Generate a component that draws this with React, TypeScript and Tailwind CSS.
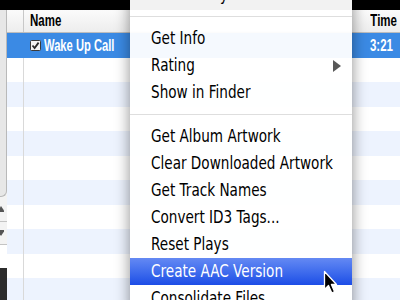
import React from "react";

const tableFont = { fontFamily: '"Liberation Sans", Arial, sans-serif' };
const menuFont = { fontFamily: '"DejaVu Sans", "Liberation Sans", sans-serif' };

function T({ children }: { children: React.ReactNode }) {
  return <span className="inline-block scale-y-[1.45] whitespace-nowrap">{children}</span>;
}

function M({ children }: { children: React.ReactNode }) {
  return <span className="inline-block scale-y-[1.25] whitespace-nowrap">{children}</span>;
}

function LeftStrip() {
  return (
    <div className="w-[7px] shrink-0 flex flex-col bg-[#f3f3f3] overflow-hidden">
      <div className="h-[187px] shrink-0 bg-[#e7e7e7] border-r border-b border-[#b9b9b9] rounded-br-[6px]" />
      <div className="h-[25px] shrink-0 border-b border-[#c4c4c4] flex items-center">
        <svg width="4" height="6" viewBox="0 0 4 6">
          <path d="M-3 6 L1 0 L5 6 Z" fill="#555" />
        </svg>
      </div>
      <div className="h-[23px] shrink-0 border-b border-[#c4c4c4] flex items-center">
        <svg width="4" height="6" viewBox="0 0 4 6">
          <path d="M-3 0 L1 6 L5 0 Z" fill="#555" />
        </svg>
      </div>
      <div className="h-[23px] shrink-0 bg-white" />
      <div className="flex-1 bg-[#2c2c2c]" />
    </div>
  );
}

function CheckBox() {
  return (
    <svg width="11" height="11" viewBox="0 0 11 11" className="shrink-0">
      <rect x="0.5" y="0.5" width="10" height="10" rx="1" fill="#f4f4f4" stroke="#3a3a3a" />
      <path d="M2.5 5.5 L4.6 8 L8.6 2.6" fill="none" stroke="#2a2a2a" strokeWidth="1.8" />
    </svg>
  );
}

type Item = { label: string; sep?: false; arrow?: boolean; active?: boolean } | { sep: true };

const items: Item[] = [
  { label: "Add to Playlist" },
  { sep: true },
  { label: "Get Info" },
  { label: "Rating", arrow: true },
  { label: "Show in Finder" },
  { sep: true },
  { label: "Get Album Artwork" },
  { label: "Clear Downloaded Artwork" },
  { label: "Get Track Names" },
  { label: "Convert ID3 Tags..." },
  { label: "Reset Plays" },
  { label: "Create AAC Version", active: true },
  { label: "Consolidate Files" },
];

export default function App() {
  const rows = Array.from({ length: 11 });
  return (
    <div className="relative w-[400px] h-[300px] overflow-hidden bg-white flex flex-col">
      <div className="h-[10px] shrink-0 bg-black" />
      <div className="flex flex-1 min-h-0">
        <LeftStrip />
        <div className="flex-1 min-w-0 flex flex-col" style={tableFont}>
          <div className="h-[23px] shrink-0 flex border-b border-[#bdbdbd] bg-linear-to-b from-[#fbfbfb] to-[#ededed] text-[11.5px] font-bold text-black">
            <div className="w-[17px] shrink-0 border-r border-[#c8c8c8]" />
            <div className="flex-1 flex items-center pl-[6px]">
              <T>Name</T>
            </div>
            <div className="w-[50px] shrink-0 flex items-center justify-end pr-[3px]">
              <T>Time</T>
            </div>
          </div>
          {rows.map((_, i) => {
            const selected = i === 0;
            const bg = selected ? "bg-[#3b8ae4]" : i % 2 === 1 ? "bg-white" : "bg-[#edf3fe]";
            return (
              <div key={i} className={`h-[24.5px] shrink-0 flex ${bg}`}>
                <div className={`w-[17px] shrink-0 border-r ${selected ? "border-[#3b8ae4]" : "border-[#d9d9d9]"}`} />
                <div className="flex-1 flex items-center pl-[6px] gap-[3px] text-[11.2px] font-bold text-white">
                  {selected && (
                    <>
                      <CheckBox />
                      <T>Wake Up Call</T>
                    </>
                  )}
                </div>
                <div className="w-[50px] shrink-0 flex items-center justify-end pr-[7px] text-[11.5px] font-bold text-white">
                  {selected && <T>3:21</T>}
                </div>
              </div>
            );
          })}
        </div>
      </div>

      <div
        className="absolute left-[130px] top-[-19px] w-[222px] bg-white/95 shadow-[0_2px_14px_rgba(0,0,0,0.45)] flex flex-col text-[13.6px] text-black"
        style={menuFont}
      >
        {items.map((it, i) =>
          it.sep ? (
            <div key={i} className="h-[17px] flex items-center">
              <div className="h-px w-full bg-[#dedede]" />
            </div>
          ) : (
            <div
              key={i}
              className={`h-[27px] flex items-center pl-[21px] pr-[11px] ${
                it.active ? "bg-linear-to-b from-[#6489f3] to-[#1c4ce6] text-white" : ""
              }`}
            >
              <div className="flex-1">
                <M>{it.label}</M>
              </div>
              {it.arrow && (
                <svg width="8" height="12" viewBox="0 0 8 12">
                  <path d="M0 0 L8 6 L0 12 Z" fill="#585858" />
                </svg>
              )}
            </div>
          )
        )}
      </div>

      <svg className="absolute left-[323px] top-[270px]" width="15" height="26" viewBox="0 0 15 26">
        <path
          d="M1.5 1.5 L1.5 19.5 L5.5 15.5 L8.8 23 L11.6 21.7 L8.4 14.5 L13.5 14.5 Z"
          fill="#000"
          stroke="#fff"
          strokeWidth="1.3"
          strokeLinejoin="round"
        />
      </svg>
    </div>
  );
}
